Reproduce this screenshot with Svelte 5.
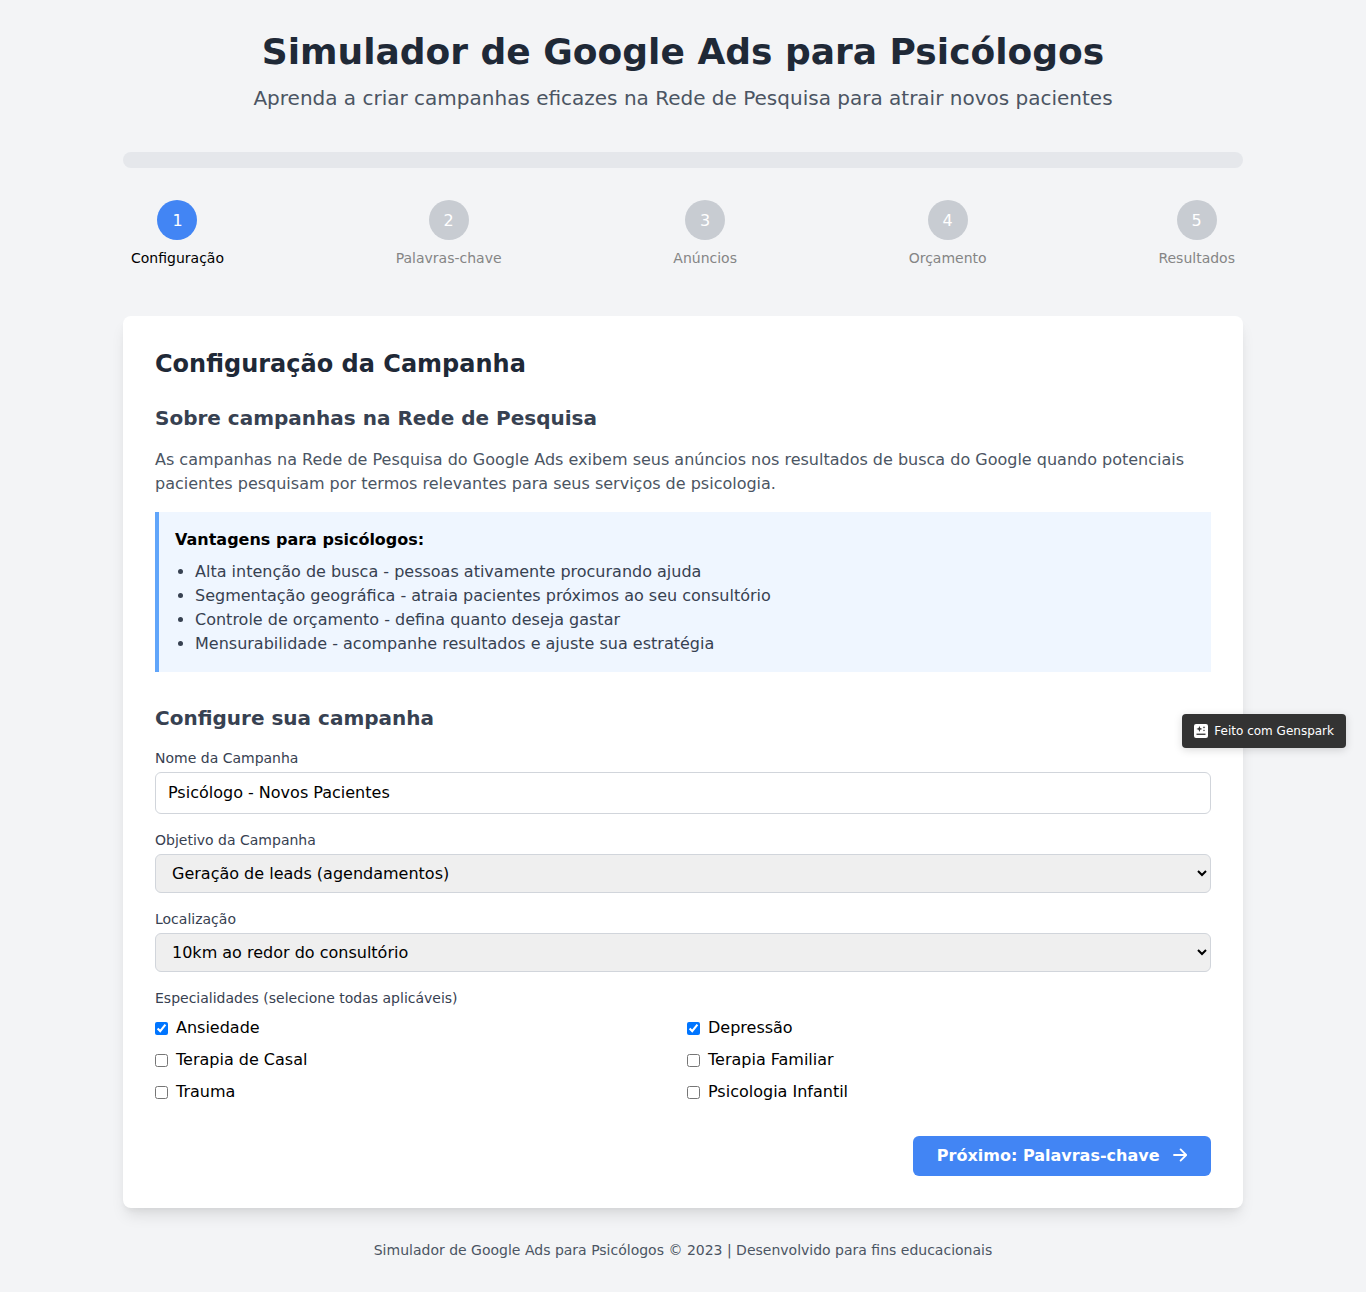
<script>
  let nome = $state('Psicólogo - Novos Pacientes');

  const passos = ['Configuração', 'Palavras-chave', 'Anúncios', 'Orçamento', 'Resultados'];

  const vantagens = [
    'Alta intenção de busca - pessoas ativamente procurando ajuda',
    'Segmentação geográfica - atraia pacientes próximos ao seu consultório',
    'Controle de orçamento - defina quanto deseja gastar',
    'Mensurabilidade - acompanhe resultados e ajuste sua estratégia'
  ];

  let especialidades = $state([
    { nome: 'Ansiedade', marcado: true },
    { nome: 'Depressão', marcado: true },
    { nome: 'Terapia de Casal', marcado: false },
    { nome: 'Terapia Familiar', marcado: false },
    { nome: 'Trauma', marcado: false },
    { nome: 'Psicologia Infantil', marcado: false }
  ]);
</script>

<div class="container">
  <header>
    <h1>Simulador de Google Ads para Psicólogos</h1>
    <p>Aprenda a criar campanhas eficazes na Rede de Pesquisa para atrair novos pacientes</p>
  </header>

  <div class="progress"></div>

  <div class="steps">
    {#each passos as passo, i}
      <div class="step" class:active={i === 0}>
        <div class="circle">{i + 1}</div>
        <div class="step-label">{passo}</div>
      </div>
    {/each}
  </div>

  <main class="card">
    <h2>Configuração da Campanha</h2>

    <h3>Sobre campanhas na Rede de Pesquisa</h3>
    <p class="intro">
      As campanhas na Rede de Pesquisa do Google Ads exibem seus anúncios nos resultados de busca do Google quando potenciais pacientes pesquisam por termos relevantes para seus serviços de psicologia.
    </p>

    <div class="callout">
      <h4>Vantagens para psicólogos:</h4>
      <ul>
        {#each vantagens as v}
          <li>{v}</li>
        {/each}
      </ul>
    </div>

    <h3 class="second">Configure sua campanha</h3>

    <div class="field">
      <label for="nome">Nome da Campanha</label>
      <input id="nome" type="text" bind:value={nome} />
    </div>

    <div class="field">
      <label for="objetivo">Objetivo da Campanha</label>
      <select id="objetivo">
        <option>Geração de leads (agendamentos)</option>
        <option>Tráfego para o site</option>
      </select>
    </div>

    <div class="field">
      <label for="local">Localização</label>
      <select id="local">
        <option>10km ao redor do consultório</option>
        <option>Cidade inteira</option>
      </select>
    </div>

    <div class="field">
      <span class="label">Especialidades (selecione todas aplicáveis)</span>
      <div class="checks">
        {#each especialidades as e}
          <label class="check">
            <input type="checkbox" bind:checked={e.marcado} />
            <span>{e.nome}</span>
          </label>
        {/each}
      </div>
    </div>

    <div class="actions">
      <button type="button">
        Próximo: Palavras-chave
        <svg width="14" height="16" viewBox="0 0 14 16" fill="none" stroke="currentColor" stroke-width="1.8" stroke-linecap="round" stroke-linejoin="round">
          <path d="M1 8h12M7.6 2.4 13.2 8 7.6 13.6" />
        </svg>
      </button>
    </div>
  </main>

  <footer>Simulador de Google Ads para Psicólogos © 2023 | Desenvolvido para fins educacionais</footer>
</div>

<a class="badge" href="#top">
  <svg width="14" height="14" viewBox="0 0 14 14">
    <rect width="14" height="14" rx="2" fill="#fff" />
    <path d="M5.4 1.9 6.2 4.1 8.4 4.9 6.2 5.7 5.4 7.9 4.6 5.7 2.4 4.9 4.6 4.1Z" fill="#333" />
    <path d="M10 2.1 10.4 3 11.3 3.4 10.4 3.8 10 4.7 9.6 3.8 8.7 3.4 9.6 3Z" fill="#333" />
    <path d="M10 5.3 10.3 6.1 11.1 6.4 10.3 6.7 10 7.5 9.7 6.7 8.9 6.4 9.7 6.1Z" fill="#333" />
    <rect x="2.5" y="9.6" width="9" height="1.3" fill="#333" />
  </svg>
  Feito com Genspark
</a>

<style>
  :global(body) {
    margin: 0;
    background: #f3f4f6;
    font-family: "DejaVu Sans", sans-serif;
    color: #000;
  }

  .container {
    max-width: 1120px;
    margin: 0 auto;
    padding: 32px 16px;
  }

  header {
    text-align: center;
    margin-bottom: 40px;
  }

  h1 {
    margin: 0 0 12px;
    font-size: 36px;
    line-height: 40px;
    font-weight: 700;
    color: #1f2937;
  }

  header p {
    margin: 0;
    font-size: 20px;
    line-height: 28px;
    color: #4b5563;
  }

  .progress {
    height: 16px;
    border-radius: 9999px;
    background: #e5e7eb;
    margin-bottom: 32px;
  }

  .steps {
    display: flex;
    justify-content: space-between;
    margin-bottom: 48px;
  }

  .step {
    display: flex;
    flex-direction: column;
    align-items: center;
    padding: 0 8px;
  }

  .circle {
    width: 40px;
    height: 40px;
    border-radius: 50%;
    background: #c8ccd2;
    color: #fff;
    display: flex;
    align-items: center;
    justify-content: center;
    font-size: 16px;
    margin-bottom: 8px;
  }

  .step-label {
    font-size: 14px;
    line-height: 20px;
    color: #858585;
  }

  .step.active .circle {
    background: #4285f4;
  }

  .step.active .step-label {
    color: #000;
  }

  .card {
    background: #fff;
    border-radius: 8px;
    padding: 32px;
    box-shadow: 0 10px 15px -3px rgba(0, 0, 0, 0.1), 0 4px 6px -2px rgba(0, 0, 0, 0.05);
  }

  h2 {
    margin: 0 0 24px;
    font-size: 24px;
    line-height: 32px;
    font-weight: 700;
    color: #1f2937;
  }

  h3 {
    margin: 0 0 16px;
    font-size: 20px;
    line-height: 28px;
    font-weight: 700;
    color: #374151;
  }

  h3.second {
    margin-top: 32px;
  }

  .intro {
    margin: 0 0 16px;
    font-size: 16px;
    line-height: 24px;
    color: #4b5563;
  }

  .callout {
    background: #eff6ff;
    border-left: 4px solid #60a5fa;
    padding: 16px;
  }

  h4 {
    margin: 0 0 8px;
    font-size: 16px;
    line-height: 24px;
    font-weight: 700;
  }

  ul {
    margin: 0;
    padding-left: 20px;
    color: #374151;
    font-size: 16px;
    line-height: 24px;
  }

  .field {
    margin-bottom: 16px;
  }

  .field > label,
  .label {
    display: block;
    font-size: 14px;
    line-height: 20px;
    color: #374151;
    margin-bottom: 4px;
  }

  .label {
    margin-bottom: 8px;
  }

  input[type='text'],
  select {
    display: block;
    width: 100%;
    box-sizing: border-box;
    border: 1px solid #d1d5db;
    border-radius: 6px;
    padding: 8px 12px;
    font-family: inherit;
    font-size: 16px;
    color: #000;
  }

  input[type='text'] {
    padding: 7px 12px 9px;
    line-height: 24px;
    height: 42px;
    background: #fff;
  }

  select {
    height: 39px;
    background-color: #efefef;
  }

  .checks {
    display: grid;
    grid-template-columns: 1fr 1fr;
    gap: 8px;
  }

  .check {
    display: flex;
    align-items: center;
    font-size: 16px;
    line-height: 24px;
  }

  .check input {
    margin: 0 8px 0 0;
  }

  .actions {
    display: flex;
    justify-content: flex-end;
    margin-top: 32px;
  }

  button {
    display: flex;
    align-items: center;
    gap: 13.5px;
    height: 40px;
    padding: 0 24px 2px;
    border: 0;
    border-radius: 6px;
    background: #4285f4;
    color: #fff;
    font-family: inherit;
    font-size: 16px;
    font-weight: 700;
  }

  footer {
    margin-top: 32px;
    text-align: center;
    font-size: 14px;
    line-height: 20px;
    color: #4b5563;
  }

  .badge {
    position: absolute;
    top: 714px;
    right: 20px;
    display: flex;
    align-items: center;
    gap: 6px;
    height: 34px;
    box-sizing: border-box;
    padding: 0 12px;
    border-radius: 4px;
    background: #333;
    color: #fff;
    font-size: 12px;
    text-decoration: none;
    box-shadow: 0 2px 8px rgba(0, 0, 0, 0.15);
  }
</style>
